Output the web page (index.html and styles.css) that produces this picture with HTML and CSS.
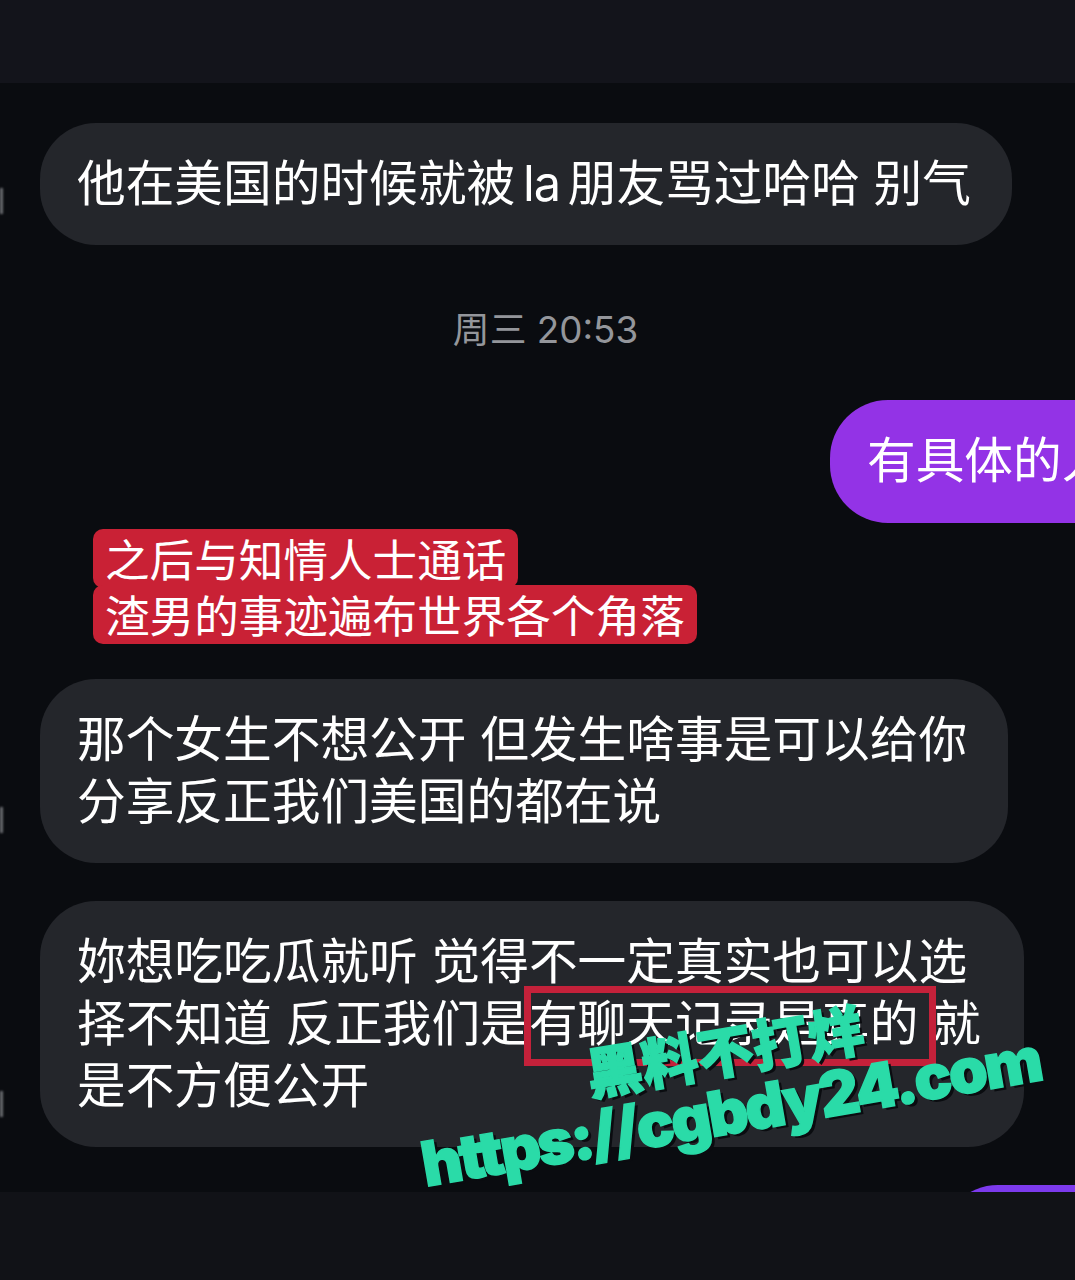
FILE: index.html
```html
<!DOCTYPE html>
<html lang="zh-CN">
<head>
    <meta charset="UTF-8">
    <meta name="viewport" content="width=device-width, initial-scale=1.0">
    <title>聊天记录</title>
    <link rel="stylesheet" href="styles.css">
</head>
<body>
    <div class="screen">
        <div class="topbar"></div>
        <div class="chat">
            <div class="bubble first">他在美国的时候就被<span class="latin"> la </span>朋友骂过哈哈 别气<span class="edge-mark mark-a"></span></div>
            <div class="time">周三 20:53</div>
            <div class="bubble mine">有具体的人吗</div>
            <div class="caption">
                <span class="caption-line">之后与知情人士通话</span>
                <span class="caption-line">渣男的事迹遍布世界各个角落</span>
            </div>
            <div class="bubble second">那个女生不想公开 但发生啥事是可以给你<br>分享反正我们美国的都在说<span class="edge-mark mark-b"></span></div>
            <div class="bubble third">妳想吃吃瓜就听 觉得不一定真实也可以选<br>择不知道 反正我们是有聊天记录是真的 就<br>是不方便公开<span class="edge-mark mark-c"></span>
                <div class="red-box"></div>
            </div>
            <div class="bubble mine next"></div>
        </div>
        <div class="bottombar"></div>
        <div class="watermark">
            <div class="wm-small">黑料不打烊</div>
            <div class="wm-url">https://cgbdy24.com</div>
        </div>
    </div>
</body>
</html>
```
FILE: styles.css
```css
* { box-sizing: border-box; }
body { margin: 0; background-color: #0a0c10; font-family: Inter, "Noto Sans CJK SC", sans-serif; }
.screen { position: relative; width: 1075px; height: 1280px; overflow: hidden; display: flex; flex-direction: column; }
.topbar { height: 83px; flex: none; background-color: #13141b; }
.bottombar { height: 88px; flex: none; background-color: #111217; }
.chat { flex: 1; min-height: 0; overflow: hidden; padding-top: 40px; display: flex; flex-direction: column; align-items: flex-start; background-color: #0a0c10; }

.bubble { position: relative; margin-left: 40px; padding: 30px 0 30px 37px; border-radius: 56px; background-color: #24262b; color: #fff; font-size: 48.7px; line-height: 62px; white-space: nowrap; flex: none; }
.first { width: 972px; }
.latin { word-spacing: -5px; letter-spacing: -1px; }
.second { width: 968px; margin-top: 38px; }
.third { width: 984px; margin-top: 38px; }

.time { width: 100%; margin-top: 64px; padding-left: 16px; text-align: center; color: #94969b; font-size: 36.8px; line-height: 42px; }

.mine { margin-left: 830px; margin-top: 49px; width: 300px; height: 123px; overflow: hidden; background-color: #9333e6; border-radius: 58px 0 0 58px; }
.next { margin-left: 940px; margin-top: 38px; width: 135px; height: 60px; background-color: #7c3aed; border-radius: 58px 0 0 0; }

.caption { margin: 6px 0 0 93px; display: flex; flex-direction: column; align-items: flex-start; flex: none; }
.caption-line { height: 59px; margin-bottom: -3px; padding: 2px 12px 0; border-radius: 10px; background-color: #c92135; color: #fff; font-size: 44.6px; line-height: 60px; }

.red-box { position: absolute; left: 484px; top: 85px; width: 412px; height: 80px; border: 7px solid #c4213a; }
.edge-mark { position: absolute; left: -40px; width: 3px; height: 26px; background-color: #6a6c70; filter: blur(1px); }
.mark-a { top: 65px; }
.mark-b { top: 128px; }
.mark-c { top: 190px; }

.watermark { position: absolute; left: 0; top: 0; color: #2adba8; font-weight: 900; white-space: nowrap; -webkit-text-stroke: 1.5px #2adba8; text-shadow: 3px 3px 0 #0a0c10; }
.wm-small { position: absolute; left: 585px; top: 1021px; font-size: 56px; line-height: 64px; transform: rotate(-9.5deg); }
.wm-url { position: absolute; left: 422px; top: 1125px; font-size: 62px; letter-spacing: -2.5px; line-height: 80px; transform: rotate(-9.8deg); transform-origin: 0 50%; }
```
